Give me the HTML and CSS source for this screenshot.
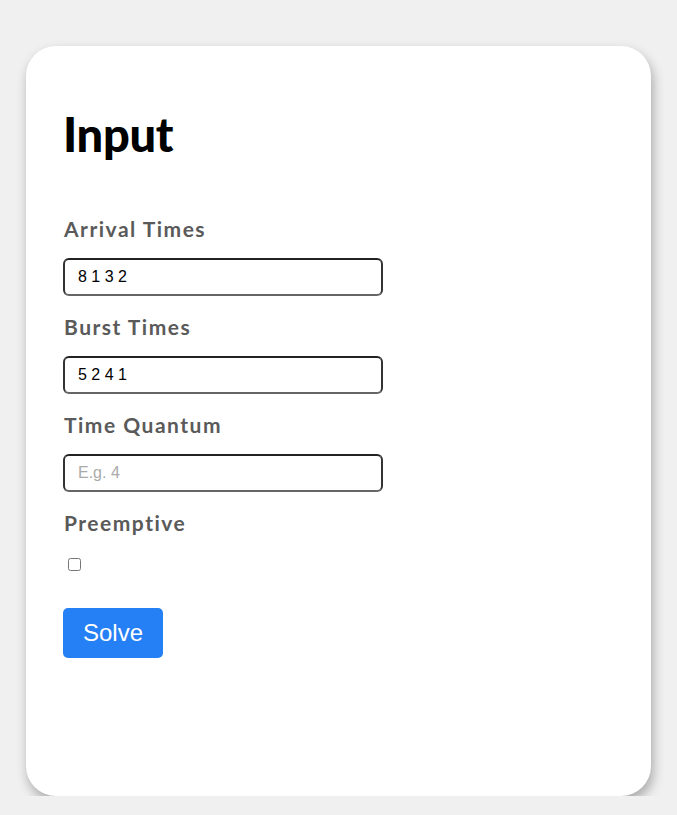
FILE: index.html
```html
<!DOCTYPE html>
<html>
<head>
<meta charset="utf-8">
<link rel="stylesheet" href="styles.css">
</head>
<body>
<div class="card">
  <h1 class="title">Input</h1>
  <form class="form">
    <label class="label" for="arrival">Arrival Times</label>
    <input class="field" id="arrival" type="text" value="8 1 3 2">
    <label class="label" for="burst">Burst Times</label>
    <input class="field" id="burst" type="text" value="5 2 4 1">
    <label class="label" for="quantum">Time Quantum</label>
    <input class="field" id="quantum" type="text" placeholder="E.g. 4">
    <label class="label" for="pre">Preemptive</label>
    <div class="check-row"><input class="check" id="pre" type="checkbox"></div>
    <div><button class="solve" type="button">Solve</button></div>
  </form>
</div>
</body>
</html>
```
FILE: styles.css
```css
html, body {
  margin: 0;
  padding: 0;
  background: #f0f0f0;
}
.card {
  box-sizing: border-box;
  margin: 46px 0 0 26px;
  width: 625px;
  height: 750px;
  background: #fff;
  border-radius: 30px;
  box-shadow: 2px 6px 12px rgba(0,0,0,0.3);
  padding: 59px 37px 0 37px;
}
.title {
  margin: 0 0 53px 0;
  font-family: "Lato", sans-serif;
  font-weight: 900;
  font-size: 47px;
  line-height: 58px;
  color: #000;
  letter-spacing: -0.3px;
}
.form {
  display: flex;
  flex-direction: column;
  align-items: flex-start;
}
.label {
  font-family: "Lato", sans-serif;
  font-weight: 700;
  font-size: 21px;
  line-height: 26px;
  color: #5a5a5a;
  margin: 0 0 16px 1px;
  letter-spacing: 1.5px;
}
.field {
  box-sizing: border-box;
  width: 320px;
  height: 38px;
  border: 2px solid #333;
  border-top-color: #222;
  border-bottom-color: #666;
  border-radius: 6px;
  padding: 0 13px;
  font-family: "Liberation Sans", Arial, sans-serif;
  font-size: 16px;
  color: #000;
  margin: 0 0 18px 0;
  outline: none;
}
.field::placeholder {
  color: #aaa;
}
.check-row {
  height: 19px;
  margin: 3px 0 0 0;
}
.check {
  width: 13px;
  height: 13px;
  margin: 3px 0 0 5px;
}
.solve {
  margin-top: 34px;
  width: 100px;
  height: 50px;
  border: none;
  border-radius: 5px;
  background: #2680f5;
  color: #fff;
  font-family: "Liberation Sans", Arial, sans-serif;
  font-size: 24px;
  padding: 0;
}
```
